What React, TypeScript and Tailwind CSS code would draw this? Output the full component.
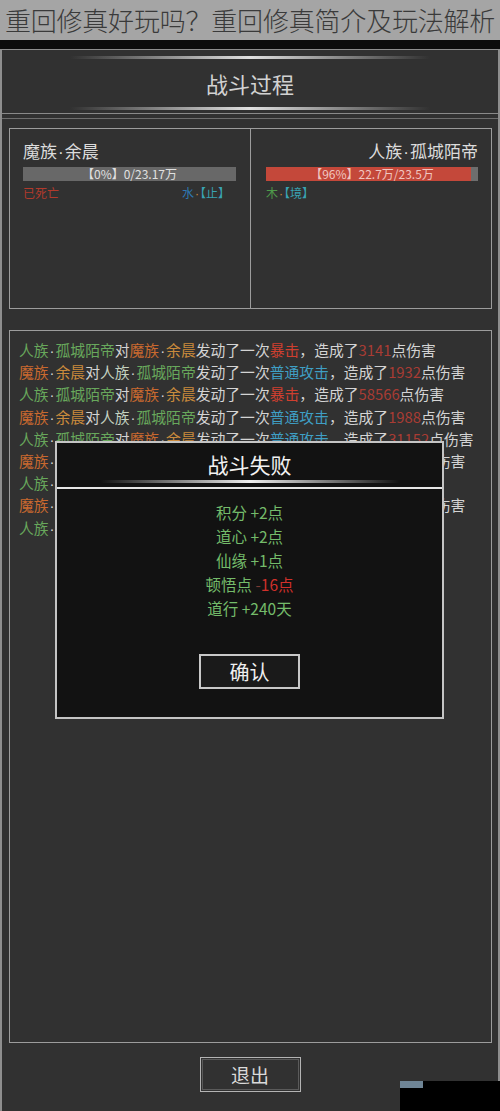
import React from "react";

const G = "text-[#68a85c]";
const GW = "text-[#c4d2c0]";
const O1 = "text-[#c9692f]";
const O2 = "text-[#c98a3c]";
const W = "text-[#d4d4d4]";
const R = "text-[#cf3f2f]";
const B = "text-[#3f9fc4]";
const N = "text-[#a83c34]";

function Dot({ cls }: { cls: string }) {
  return <span className={`${cls} font-['Liberation_Sans',sans-serif] px-[1px] leading-none`}>·</span>;
}

function Human({ target }: { target?: boolean }) {
  return (
    <>
      <span className={target ? GW : G}>人族</span>
      <Dot cls={W} />
      <span className={G}>孤城陌帝</span>
    </>
  );
}
function Demon() {
  return (
    <>
      <span className={O1}>魔族</span>
      <Dot cls={W} />
      <span className={O2}>余晨</span>
    </>
  );
}

function Line({ humanFirst, crit, dmg }: { humanFirst: boolean; crit: boolean; dmg: string }) {
  return (
    <div className="h-[22.2px] flex items-center whitespace-nowrap">
      <div>
        {humanFirst ? <Human /> : <Demon />}
        <span className={W}>对</span>
        {humanFirst ? <Demon /> : <Human target />}
        <span className={W}>发动了一次</span>
        <span className={crit ? R : B}>{crit ? "暴击" : "普通攻击"}</span>
        <span className={W}>，造成了</span>
        <span className={N}>{dmg}</span>
        <span className={W}>点伤害</span>
      </div>
    </div>
  );
}

const lines = [
  { humanFirst: true, crit: true, dmg: "3141" },
  { humanFirst: false, crit: false, dmg: "1932" },
  { humanFirst: true, crit: true, dmg: "58566" },
  { humanFirst: false, crit: false, dmg: "1988" },
  { humanFirst: true, crit: false, dmg: "31152" },
  { humanFirst: false, crit: false, dmg: "2015" },
  { humanFirst: true, crit: true, dmg: "4120" },
  { humanFirst: false, crit: false, dmg: "1976" },
  { humanFirst: true, crit: true, dmg: "3308" },
];

export default function App() {
  return (
    <div className="relative w-[500px] h-[1111px] overflow-hidden flex flex-col bg-[#0c0c0c] font-['Noto_Sans_CJK_SC','Noto_Sans',sans-serif]">
      {/* article title band */}
      <div className="h-[40px] bg-[#a5a5a5] flex items-center justify-center text-[26px] leading-none font-light text-[#3a3a3a] whitespace-nowrap tracking-[-0.2px]">
        重回修真好玩吗？重回修真简介及玩法解析
      </div>
      <div className="h-[9px] bg-[#0c0c0c]" />

      {/* main game panel */}
      <div className="flex-1 flex flex-col bg-[#313131] border-t border-x-2 border-[#8e8e8e]">
        {/* header */}
        <div className="h-[63px] flex flex-col items-center">
          <div className="mt-[6px] h-[3px] w-[360px] bg-linear-to-r from-transparent via-[#e0e0e0] to-transparent" />
          <div className="h-[48px] flex items-center text-[22px] text-[#d2d2d2] leading-none">战斗过程</div>
          <div className="h-[3px] w-[360px] bg-linear-to-r from-transparent via-[#e0e0e0] to-transparent" />
        </div>
        <div className="h-px bg-[#8a8a8a]" />
        <div className="h-[4px]" />
        <div className="h-px bg-[#6e6e6e]" />

        {/* fighters */}
        <div className="mt-[9px] ml-[7px] w-[483px] h-[181px] border border-[#9c9c9c] flex">
          <div className="w-[240px] pl-[13px] pr-[13px] pt-[10px] flex flex-col">
            <div className="h-[24px] flex items-center text-[17px] text-[#dcdcdc]">
              <span>
                魔族<Dot cls="text-[#dcdcdc]" />余晨
              </span>
            </div>
            <div className="mt-[4px] h-[14px] w-[213px] bg-[#686868] flex items-center justify-center text-[12px] leading-none text-[#e0e0e0]">
              【0%】0/23.17万
            </div>
            <div className="mt-[4px] flex justify-between text-[12px] leading-[16px] w-[213px]">
              <span className="text-[#b23a2c]">已死亡</span>
              <span className="pr-[6px]">
                <span className="text-[#2d78b4]">水</span>
                <Dot cls="text-[#c98a3c]" />
                <span className="text-[#39a3b3]">【止】</span>
              </span>
            </div>
          </div>
          <div className="w-px bg-[#9c9c9c]" />
          <div className="flex-1 pl-[13px] pr-[13px] pt-[10px] flex flex-col items-end">
            <div className="h-[24px] flex items-center text-[17px] text-[#dcdcdc]">
              <span>
                人族<Dot cls="text-[#dcdcdc]" />孤城陌帝
              </span>
            </div>
            <div className="relative mt-[4px] h-[14px] w-[212px] bg-[#6e6e6e]">
              <div className="absolute left-0 top-0 h-full bg-[#c4483a]" style={{ width: "96.5%" }} />
              <div className="relative h-full flex items-center justify-center text-[12px] leading-none text-[#f0c6c0]">
                【96%】22.7万/23.5万
              </div>
            </div>
            <div className="mt-[4px] w-[212px] text-[12px] leading-[16px]">
              <span className="text-[#4f9a4a]">木</span>
              <Dot cls="text-[#c98a3c]" />
              <span className="text-[#39a3b3]">【境】</span>
            </div>
          </div>
        </div>

        {/* battle log */}
        <div className="mt-[21px] ml-[7px] w-[483px] h-[713px] border border-[#9c9c9c] pt-[8px] pl-[9px] text-[14.8px] overflow-hidden">
          {lines.map((l, i) => (
            <Line key={i} {...l} />
          ))}
        </div>

        {/* exit */}
        <div className="mt-[14px] flex justify-center">
          <div className="w-[101px] h-[35px] border border-[#b4b4b4] p-px">
            <div className="w-full h-full border border-[#5a5a5a] flex items-center justify-center text-[19px] leading-none text-[#dadada]">
              退出
            </div>
          </div>
        </div>
      </div>

      {/* result modal */}
      <div className="absolute left-[55px] top-[441px] w-[389px] h-[278px] bg-[#121212] border-2 border-[#c4c4c4] flex flex-col items-center">
        <div className="mt-[6px] h-[30px] flex items-center text-[21px] leading-none text-[#f2f2f2]">战斗失败</div>
        <div className="mt-[1px] h-[3px] w-[300px] bg-linear-to-r from-transparent via-[#f0f0f0] to-transparent" />
        <div className="mt-[4px] h-[2px] w-full bg-[#e6e6e6]" />
        <div className="mt-[11px] flex flex-col items-center text-[15.5px] leading-[24px] text-[#74bb6a]">
          <div>积分 +2点</div>
          <div>道心 +2点</div>
          <div>仙缘 +1点</div>
          <div>
            顿悟点 <span className="text-[#7a3a34]">-</span>
            <span className="text-[#d0302a]">16点</span>
          </div>
          <div>道行 +240天</div>
        </div>
        <div className="mt-[34px] w-[101px] h-[35px] border-2 border-[#c8c8c8] bg-[#1a1a1a] flex items-center justify-center text-[20px] leading-none text-[#f0f0f0]">
          确认
        </div>
      </div>

      {/* watermark corner */}
      <div className="absolute right-0 bottom-0 w-[100px] h-[30px] bg-black">
        <div className="w-[23px] h-[7px] bg-[#6f8596]" />
      </div>
    </div>
  );
}
